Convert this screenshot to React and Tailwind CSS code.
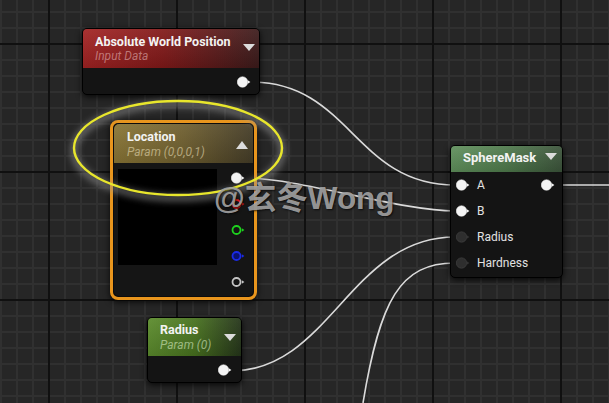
import React from "react";

// small triangle in node headers (collapse arrow)
function Arrow({ up = false }) {
  return (
    <svg width="12" height="8" viewBox="0 0 12 8" className="block">
      {up ? (
        <path d="M0 8 L6 0 L12 8 Z" fill="#dcdcdc" />
      ) : (
        <path d="M0 0 L12 0 L6 7 Z" fill="#dcdcdc" />
      )}
    </svg>
  );
}

// connection pin: circle + small arrow tip
function Pin({ color = "#f4f4f4", hollow = false, fill, dim = false }) {
  return (
    <svg width="14" height="12" viewBox="0 0 14 12" className="block">
      {hollow ? (
        <circle cx="5.5" cy="6" r="4" fill={fill || "none"} stroke={color} strokeWidth="1.8" />
      ) : (
        <circle cx="5.5" cy="6" r="5.2" fill={color} stroke={dim ? "#474747" : color} strokeWidth="0.6" />
      )}
      <path d="M10.8 4.2 L13.4 6 L10.8 7.8 Z" fill={dim ? "#333333" : color} />
    </svg>
  );
}

function GridBg() {
  return (
    <svg className="absolute inset-0" width="609" height="403">
      <defs>
        <pattern id="minor" x="0" y="11" width="16" height="16" patternUnits="userSpaceOnUse">
          <rect x="0" y="0" width="2" height="16" fill="#303030" />
          <rect x="0" y="0" width="16" height="2" fill="#303030" />
        </pattern>
        <pattern id="major" x="48" y="43" width="128" height="128" patternUnits="userSpaceOnUse">
          <rect x="0" y="0" width="2" height="128" fill="#101010" />
          <rect x="0" y="0" width="128" height="2" fill="#101010" />
        </pattern>
      </defs>
      <rect width="609" height="403" fill="#262626" />
      <rect width="609" height="403" fill="url(#minor)" />
      <rect width="609" height="403" fill="url(#major)" />
    </svg>
  );
}

function Wires() {
  return (
    <svg className="absolute inset-0" width="609" height="403" fill="none" stroke="#dadada" strokeWidth="1.6">
      <path d="M251 82 C350 82, 355 185, 455 185" />
      <path d="M244 178 C300 178, 400 211, 455 211" />
      <path d="M231 371 C330 371, 350 237, 455 237" />
      <path d="M455 263 C400 263, 380 300, 363 403" />
      <path d="M555 185 H609" />
    </svg>
  );
}

function Highlight() {
  return (
    <svg className="absolute inset-0 pointer-events-none" width="609" height="403" fill="none">
      <defs>
        <filter id="halo" x="-20%" y="-40%" width="140%" height="180%">
          <feGaussianBlur stdDeviation="3" />
        </filter>
      </defs>
      <ellipse cx="178" cy="151" rx="104" ry="47" stroke="rgba(150,150,150,0.5)" strokeWidth="8" filter="url(#halo)" />
      <ellipse cx="178" cy="148" rx="104" ry="47" stroke="#e8e62c" strokeWidth="2.4" />
    </svg>
  );
}

export default function App() {
  return (
    <div className="relative w-[609px] h-[403px] overflow-hidden bg-[#262626] font-['Roboto',sans-serif]">
      <GridBg />
      <Wires />

      {/* Absolute World Position */}
      <div className="absolute left-[82px] top-[28px] w-[178px] h-[67px] rounded-[5px] border border-black bg-[#141414] shadow-[0_2px_6px_rgba(0,0,0,0.8)] overflow-hidden">
        <div className="h-[39px] flex items-center justify-between pl-[12px] pr-[4px] bg-[linear-gradient(to_bottom,rgba(255,255,255,0.07),rgba(0,0,0,0.12)),linear-gradient(to_right,#a32323,#821919_45%,#3c1b1b)]">
          <div className="pt-[1px]">
            <div className="text-[12.5px] leading-[15px] font-bold text-[#f3f3f3]">Absolute World Position</div>
            <div className="text-[12px] leading-[15px] italic text-[#e0b0b0]/60">Input Data</div>
          </div>
          <div className="mt-[-1px]">
            <Arrow />
          </div>
        </div>
        <div className="h-[27px] flex items-center justify-end pr-[8px]">
          <Pin />
        </div>
      </div>

      {/* Location (selected) */}
      <div className="absolute left-[110px] top-[120px] w-[147px] h-[180px] rounded-[8px] border-[3px] border-[#e8951d] bg-[#0c0c0c] p-px shadow-[0_2px_6px_rgba(0,0,0,0.8)]">
        <div className="w-full h-full rounded-[5px] bg-[#151515] overflow-hidden">
          <div className="h-[39px] flex items-center justify-between pl-[13px] pr-[5px] bg-[linear-gradient(to_bottom,rgba(255,255,255,0.06),rgba(0,0,0,0.12)),linear-gradient(to_right,#8a7636,#706030_50%,#453d28)]">
            <div className="pt-[1px]">
              <div className="text-[12.5px] leading-[16px] font-bold text-[#f3f3f3]">Location</div>
              <div className="text-[12px] leading-[15px] italic text-[#e6dcb4]/60">Param (0,0,0,1)</div>
            </div>
            <div className="mt-[2px]">
              <Arrow up />
            </div>
          </div>
          <div className="flex pl-[4px] pt-[6px] pr-[8px]">
            <div className="w-[99px] h-[96px] bg-black" />
            <div className="ml-auto flex flex-col gap-[14px] pt-[3px]">
              <Pin />
              <Pin color="#e01818" hollow />
              <Pin color="#1ed21e" hollow />
              <Pin color="#1a2ae6" hollow fill="#0b1270" />
              <Pin color="#c4c4c4" hollow />
            </div>
          </div>
        </div>
      </div>

      {/* Radius parameter */}
      <div className="absolute left-[147px] top-[317px] w-[95px] h-[66px] rounded-[5px] border border-black bg-[#141414] shadow-[0_2px_6px_rgba(0,0,0,0.8)] overflow-hidden">
        <div className="h-[38px] flex items-center justify-between pl-[12px] pr-[5px] bg-[linear-gradient(to_bottom,rgba(255,255,255,0.06),rgba(0,0,0,0.12)),linear-gradient(to_right,#5c8c2d,#48721f_50%,#25351a)]">
          <div className="pt-[1px]">
            <div className="text-[12.5px] leading-[16px] font-bold text-[#f3f3f3]">Radius</div>
            <div className="text-[12px] leading-[15px] italic text-[#d8ecc4]/60">Param (0)</div>
          </div>
          <div className="mt-[2px]">
            <Arrow />
          </div>
        </div>
        <div className="h-[27px] flex items-center justify-end pr-[9px]">
          <Pin />
        </div>
      </div>

      {/* SphereMask */}
      <div className="absolute left-[450px] top-[145px] w-[113px] h-[133px] rounded-[5px] border border-black bg-[#141414] shadow-[0_2px_6px_rgba(0,0,0,0.8)] overflow-hidden">
        <div className="h-[26px] flex justify-between pl-[12px] pr-[5px] pt-[4px] bg-[linear-gradient(to_bottom,rgba(255,255,255,0.08),rgba(0,0,0,0.1)),linear-gradient(to_right,#5e8e5a,#4d784a_50%,#3a5239)]">
          <div className="text-[13px] leading-[16px] font-bold text-[#f3f3f3]">SphereMask</div>
          <div className="mt-[3px]">
            <Arrow />
          </div>
        </div>
        <div className="flex flex-col text-[12px] text-[#e2e2e2]">
          <div className="h-[26px] flex items-center pl-[5px] pr-[7px]">
            <Pin />
            <span className="ml-[7px]">A</span>
            <div className="ml-auto">
              <Pin />
            </div>
          </div>
          <div className="h-[26px] flex items-center pl-[5px]">
            <Pin />
            <span className="ml-[7px]">B</span>
          </div>
          <div className="h-[26px] flex items-center pl-[5px]">
            <Pin color="#2e2e2e" dim />
            <span className="ml-[7px]">Radius</span>
          </div>
          <div className="h-[26px] flex items-center pl-[5px]">
            <Pin color="#2e2e2e" dim />
            <span className="ml-[7px]">Hardness</span>
          </div>
        </div>
      </div>

      <Highlight />

      {/* watermark */}
      <div className="absolute left-[214px] top-[180px] text-[31.5px] leading-[36px] font-bold text-[#a6a6a6]/90 font-['Liberation_Sans','Noto_Sans_CJK_SC',sans-serif] [text-shadow:1px_1px_2px_rgba(0,0,0,0.7)]">
        @玄冬Wong
      </div>
    </div>
  );
}
